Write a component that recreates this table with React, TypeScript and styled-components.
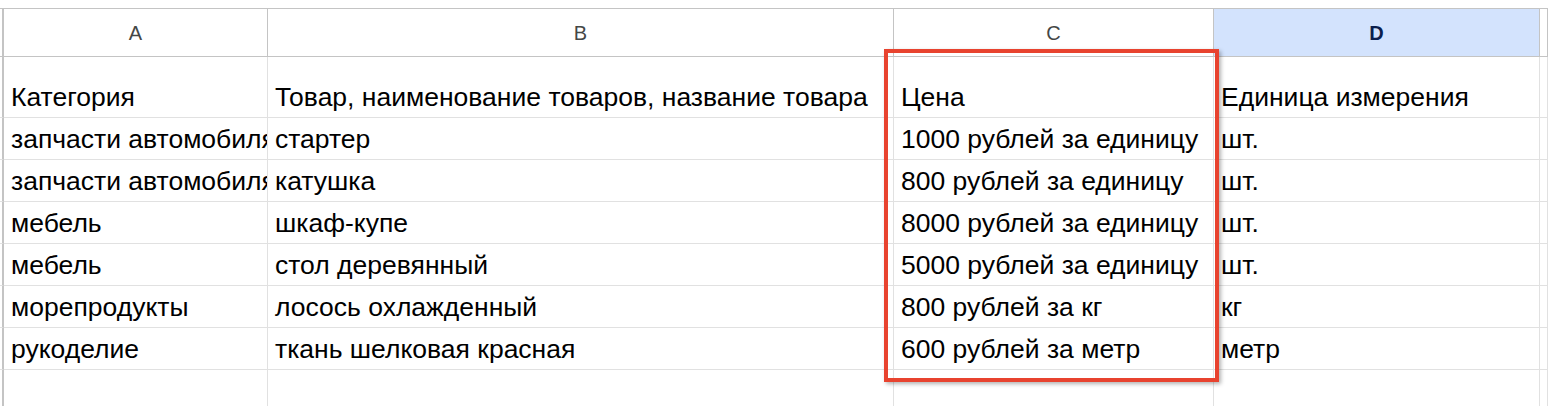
import styled, {createGlobalStyle} from "styled-components";

const columns = [
    {key: "A", width: 264},
    {key: "B", width: 626},
    {key: "C", width: 320},
    {key: "D", width: 326, selected: true},
];

const rows: string[][] = [
    ["Категория", "Товар, наименование товаров, название товара", "Цена", "Единица измерения"],
    ["запчасти автомобиля", "стартер", "1000 рублей за единицу", "шт."],
    ["запчасти автомобиля", "катушка", "800 рублей за единицу", "шт."],
    ["мебель", "шкаф-купе", "8000 рублей за единицу", "шт."],
    ["мебель", "стол деревянный", "5000 рублей за единицу", "шт."],
    ["морепродукты", "лосось охлажденный", "800 рублей за кг", "кг"],
    ["рукоделие", "ткань шелковая красная", "600 рублей за метр", "метр"],
    ["", "", "", ""],
];

const template = `4px ${columns.map(c => c.width + "px").join(" ")} 1fr`;

export default function App() {
    return (
        <>
            <GlobalStyle/>
            <SheetStyle>
                <GridStyle style={{gridTemplateColumns: template}}>
                    <CornerStyle/>
                    {columns.map(c => (
                        <ColumnHeaderStyle key={c.key} $selected={c.selected}>{c.key}</ColumnHeaderStyle>
                    ))}
                    <ColumnHeaderStyle/>
                    {rows.map((row, i) => (
                        <RowGroup key={i} row={row} first={i === 0}/>
                    ))}
                </GridStyle>
                <HighlightStyle/>
            </SheetStyle>
        </>
    );
}

function RowGroup({row, first}: {row: string[]; first: boolean}) {
    return (
        <>
            <StubStyle $first={first}/>
            {row.map((text, j) => (
                <CellStyle key={j} $first={first}>{text}</CellStyle>
            ))}
            <CellStyle $first={first}/>
        </>
    );
}

const GlobalStyle = createGlobalStyle`
  *, *::before, *::after {
    box-sizing: border-box;
  }
  html, body {
    margin: 0;
    padding: 0;
    background: #fff;
    overflow: hidden;
  }
  body {
    font-family: "Liberation Sans", Arial, sans-serif;
  }
`;

const SheetStyle = styled.div`
  position: relative;
  width: 1548px;
  height: 406px;
  padding-top: 8px;
  overflow: hidden;
`;

const GridStyle = styled.div`
  display: grid;
  border-top: 1px solid #c4c4c4;
`;

const CornerStyle = styled.div`
  height: 48px;
  border-right: 2px solid #c4c4c4;
  border-bottom: 1px solid #c4c4c4;
`;

const ColumnHeaderStyle = styled.div<{ $selected?: boolean }>`
  height: 48px;
  display: flex;
  align-items: center;
  justify-content: center;
  border-right: 1px solid #c4c4c4;
  border-bottom: 1px solid #c4c4c4;
  background: ${p => p.$selected ? "#d3e3fd" : "#fff"};
  color: ${p => p.$selected ? "#0b1f4d" : "#444746"};
  font-weight: ${p => p.$selected ? 700 : 400};
  font-size: 20px;
  padding-top: 1px;

  &:last-child {
    border-right: none;
  }
`;

const StubStyle = styled.div<{ $first?: boolean }>`
  height: ${p => p.$first ? 61 : 42}px;
  border-right: 2px solid #c4c4c4;
  border-bottom: 1px solid #e1e1e1;
`;

const CellStyle = styled.div<{ $first?: boolean }>`
  height: ${p => p.$first ? 61 : 42}px;
  border-right: 1px solid #e1e1e1;
  border-bottom: 1px solid #e1e1e1;
  padding: 0 0 5px 7px;
  display: flex;
  align-items: flex-end;
  font-size: 26.5px;
  line-height: 30px;
  color: #000;
  white-space: nowrap;
  overflow: hidden;
`;

const HighlightStyle = styled.div`
  position: absolute;
  left: 884px;
  top: 49px;
  width: 335px;
  height: 333px;
  border: 4px solid #e8432f;
  box-shadow: 2px 2px 4px rgba(0, 0, 0, 0.3);
  pointer-events: none;
`;
